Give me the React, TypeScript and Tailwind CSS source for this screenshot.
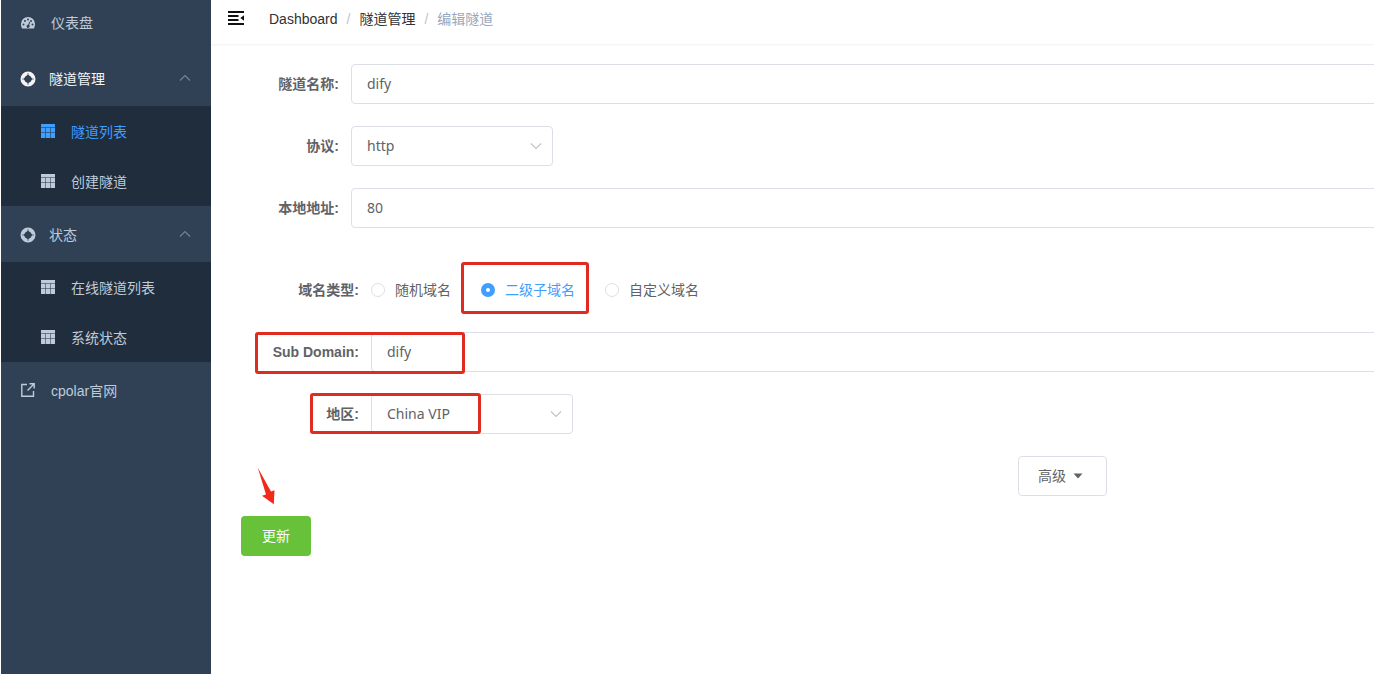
import { useState } from 'react';
import type { ReactNode } from 'react';

function DashboardIcon() {
  return (
    <svg viewBox="0 0 28 28" className="size-3.5 shrink-0" aria-hidden="true">
      <path
        fill="currentColor"
        fillRule="evenodd"
        d="M14 2a14 14 0 0 1 14 14c0 3-.8 6.600-2.200 9H2.200A15.500 15.500 0 0 1 0 16 14 14 0 0 1 14 2ZM5 15.200a2 2 0 1 0 0 4 2 2 0 0 0 0-4Zm3-7a2 2 0 1 0 0 4 2 2 0 0 0 0-4ZM14 5a2 2 0 1 0 0 4 2 2 0 0 0 0-4Zm9 10.200a2 2 0 1 0 0 4 2 2 0 0 0 0-4Zm-3-7a2 2 0 1 0 0 4 2 2 0 0 0 0-4Zm-3.300 3.200-2.400 6.200a3 3 0 1 0 1.900.7l2.300-6.200-1.800-.7Z"
      />
    </svg>
  );
}

function RingIcon() {
  return (
    <svg viewBox="0 0 16 16" className="size-4 shrink-0" aria-hidden="true">
      <circle cx="8" cy="8" r="5.500" fill="none" stroke="currentColor" strokeWidth="4" />
      <path d="M8 2v3M8 11v3M2 8h3M11 8h3" stroke="#304156" strokeWidth="1" opacity=".6" />
      <path d="M8 3.600 12.400 8 8 12.400 3.600 8z" fill="#304156" />
    </svg>
  );
}

function TableIcon() {
  return (
    <svg viewBox="0 0 14 14" className="size-3.5 shrink-0" fill="currentColor" aria-hidden="true">
      <path d="M0 0h14v3.300H0zM0 3.800h4.500v4.700H0zM5 3.800h4v4.700H5zM9.500 3.800H14v4.700H9.500zM0 9h4.500v5H0zM5 9h4v5H5zM9.500 9H14v5H9.500z" />
    </svg>
  );
}

function LinkIcon() {
  return (
    <svg viewBox="0 0 14 14" className="size-3.5 shrink-0" fill="none" stroke="currentColor" strokeWidth="1.400" aria-hidden="true">
      <path d="M6 1.500H.8v11.700h11.700V8M8.500.8h4.700v4.700M13 1 6.500 7.500" />
    </svg>
  );
}

function FoldIcon() {
  return (
    <svg viewBox="0 0 16 14" className="h-3.5 w-4" aria-hidden="true">
      <path d="M0 1h16M0 5h10.500M0 9h10.500M0 13h16" stroke="#111" strokeWidth="1.800" />
      <path d="M12.300 7 16 4.200v5.600z" fill="#111" />
    </svg>
  );
}

function Chevron({ className }: { className: string }) {
  return (
    <svg viewBox="0 0 12 8" className={className} fill="none" stroke="currentColor" strokeWidth="1.200" aria-hidden="true">
      <path d="m1 1.500 5 5 5-5" />
    </svg>
  );
}

function SubMenu({ title, active, children }: { title: string; active?: boolean; children: ReactNode }) {
  const [open, setOpen] = useState(true);
  return (
    <li>
      <button
        type="button"
        aria-expanded={open}
        onClick={() => setOpen(!open)}
        className={`flex h-14 w-full items-center gap-[13px] pt-0.5 pr-5 pl-[19px] ${active ? 'text-[#f4f4f5]' : 'text-[#bfcbd9]'}`}
      >
        <RingIcon />
        <span className="flex-1 text-left">{title}</span>
        <Chevron className={`mb-0.5 h-2 w-3 text-[#73808f] ${open ? 'rotate-180' : ''}`} />
      </button>
      {open && <ul className="bg-[#1f2d3d]">{children}</ul>}
    </li>
  );
}

function SubItem({ title, active }: { title: string; active?: boolean }) {
  return (
    <li>
      <a href="#" className={`flex h-[50px] items-center gap-4 pl-10 ${active ? 'text-[#409eff]' : 'text-[#bfcbd9]'}`}>
        <TableIcon />
        <span className="pt-0.5">{title}</span>
      </a>
    </li>
  );
}

const labelBase = 'shrink-0 pr-3 text-right font-bold text-[#606266]';
const field =
  "h-10 rounded border border-[#dcdfe6] bg-white px-[15px] text-sm text-[#606266] outline-none font-['Noto_Sans','Noto_Sans_CJK_SC',sans-serif]";
const mark = 'pointer-events-none absolute rounded-[3px] border-3 border-[#e02b20]';

function Row({ id, label, wide, children }: { id: string; label: string; wide?: boolean; children: ReactNode }) {
  return (
    <div className="relative flex items-center">
      <label htmlFor={id} className={`${labelBase} ${wide ? 'w-[130px]' : 'w-[110px]'}`}>
        {label}
      </label>
      {children}
    </div>
  );
}

function Select({ id, options }: { id: string; options: string[] }) {
  return (
    <div className="relative w-[202px]">
      <select id={id} className={`${field} w-full appearance-none`}>
        {options.map((o) => (
          <option key={o}>{o}</option>
        ))}
      </select>
      <Chevron className="pointer-events-none absolute top-4 right-[11px] h-2 w-3 text-[#c0c4cc]" />
    </div>
  );
}

const domainTypes = ['随机域名', '二级子域名', '自定义域名'];

export default function App() {
  const [domain, setDomain] = useState('二级子域名');
  return (
    <div className="flex min-h-screen overflow-hidden bg-white font-['Liberation_Sans','Noto_Sans_CJK_SC',sans-serif] text-sm">
      <nav className="ml-px w-[210px] shrink-0 bg-[#304156] text-[#bfcbd9]">
        <ul>
          <li className="pb-1">
            <a href="#" className="flex h-[46px] items-center gap-4 pl-5">
              <DashboardIcon />
              仪表盘
            </a>
          </li>
          <SubMenu title="隧道管理" active>
            <SubItem title="隧道列表" active />
            <SubItem title="创建隧道" />
          </SubMenu>
          <SubMenu title="状态">
            <SubItem title="在线隧道列表" />
            <SubItem title="系统状态" />
          </SubMenu>
          <li>
            <a href="#" className="flex h-14 items-center gap-4 pl-5">
              <LinkIcon />
              <span className="pt-0.5">cpolar官网</span>
            </a>
          </li>
        </ul>
      </nav>

      <main className="min-w-0 flex-1 overflow-hidden">
        <header className="flex h-11 items-center gap-[25px] pb-2 pl-[17px] shadow-[0_1px_2px_rgba(0,21,41,0.06)]">
          <button type="button" aria-label="折叠菜单">
            <FoldIcon />
          </button>
          <nav className="flex items-center gap-[9px] pt-0.5">
            <a href="#" className="text-[#303133]">Dashboard</a>
            <span className="text-[#c0c4cc]">/</span>
            <a href="#" className="text-[#303133]">隧道管理</a>
            <span className="text-[#c0c4cc]">/</span>
            <span className="text-[#97a8be]">编辑隧道</span>
          </nav>
        </header>

        <form className="-mr-[510px] pt-5 pl-[30px]" onSubmit={(e) => e.preventDefault()}>
          <div className="flex flex-col gap-[22px]">
            <Row id="name" label="隧道名称:">
              <input id="name" defaultValue="dify" className={`${field} flex-1 pb-0.5`} />
            </Row>
            <Row id="protocol" label="协议:">
              <Select id="protocol" options={['http', 'https', 'tcp']} />
            </Row>
            <Row id="addr" label="本地地址:">
              <input id="addr" defaultValue="80" className={`${field} flex-1 pb-0.5`} />
            </Row>
          </div>

          <div className="mt-[42px] flex flex-col gap-[22px]">
            <fieldset aria-labelledby="domain-type">
              <div className="flex h-10 items-center">
                <span id="domain-type" className={`${labelBase} w-[130px]`}>域名类型:</span>
                <div className="flex gap-[30px]">
                  {domainTypes.map((t) => (
                    <label
                      key={t}
                      className={`relative flex items-center gap-2.5 ${domain === t ? 'text-[#409eff]' : 'text-[#606266]'}`}
                    >
                      <input
                        type="radio"
                        name="domain"
                        checked={domain === t}
                        onChange={() => setDomain(t)}
                        className="size-3.5 appearance-none rounded-full border border-[#dcdfe6] bg-white checked:border-5 checked:border-[#409eff]"
                      />
                      {t}
                      {t === '二级子域名' && <span className={`${mark} -top-[18px] -right-3.5 -bottom-3.5 -left-5`} />}
                    </label>
                  ))}
                </div>
              </div>
            </fieldset>
            <Row id="sub" label="Sub Domain:" wide>
              <input id="sub" defaultValue="dify" className={`${field} flex-1 pb-0.5`} />
              <span className={`${mark} top-0 -bottom-0.5 left-3.5 w-[210px]`} />
            </Row>
            <Row id="region" label="地区:" wide>
              <Select id="region" options={['China VIP', 'China Top', 'United States']} />
              <span className={`${mark} -top-px bottom-0 left-[69px] w-[171px]`} />
            </Row>
            <div className="flex justify-center">
              <button
                type="button"
                className="flex h-10 items-center gap-[7px] rounded border border-[#dcdfe6] bg-white pr-[23px] pl-[19px] text-[#606266]"
              >
                高级
                <svg viewBox="0 0 10 6" className="h-1.5 w-2.5" fill="currentColor" aria-hidden="true">
                  <path d="M.5.500h9L5 5.500z" />
                </svg>
              </button>
            </div>
          </div>

          <div className="relative mt-5">
            <button type="submit" className="h-10 rounded bg-[#67c23a] px-[21px] text-white">
              更新
            </button>
            <svg viewBox="0 0 18 38" className="pointer-events-none absolute -top-[49px] left-4 h-[38px] w-[18px]" fill="#f3291b" aria-hidden="true">
              <path d="M.8.800 14 24.600 17.500 23.300 16.800 37.300 5 28.800 9 27.600z" />
            </svg>
          </div>
        </form>
      </main>
    </div>
  );
}
